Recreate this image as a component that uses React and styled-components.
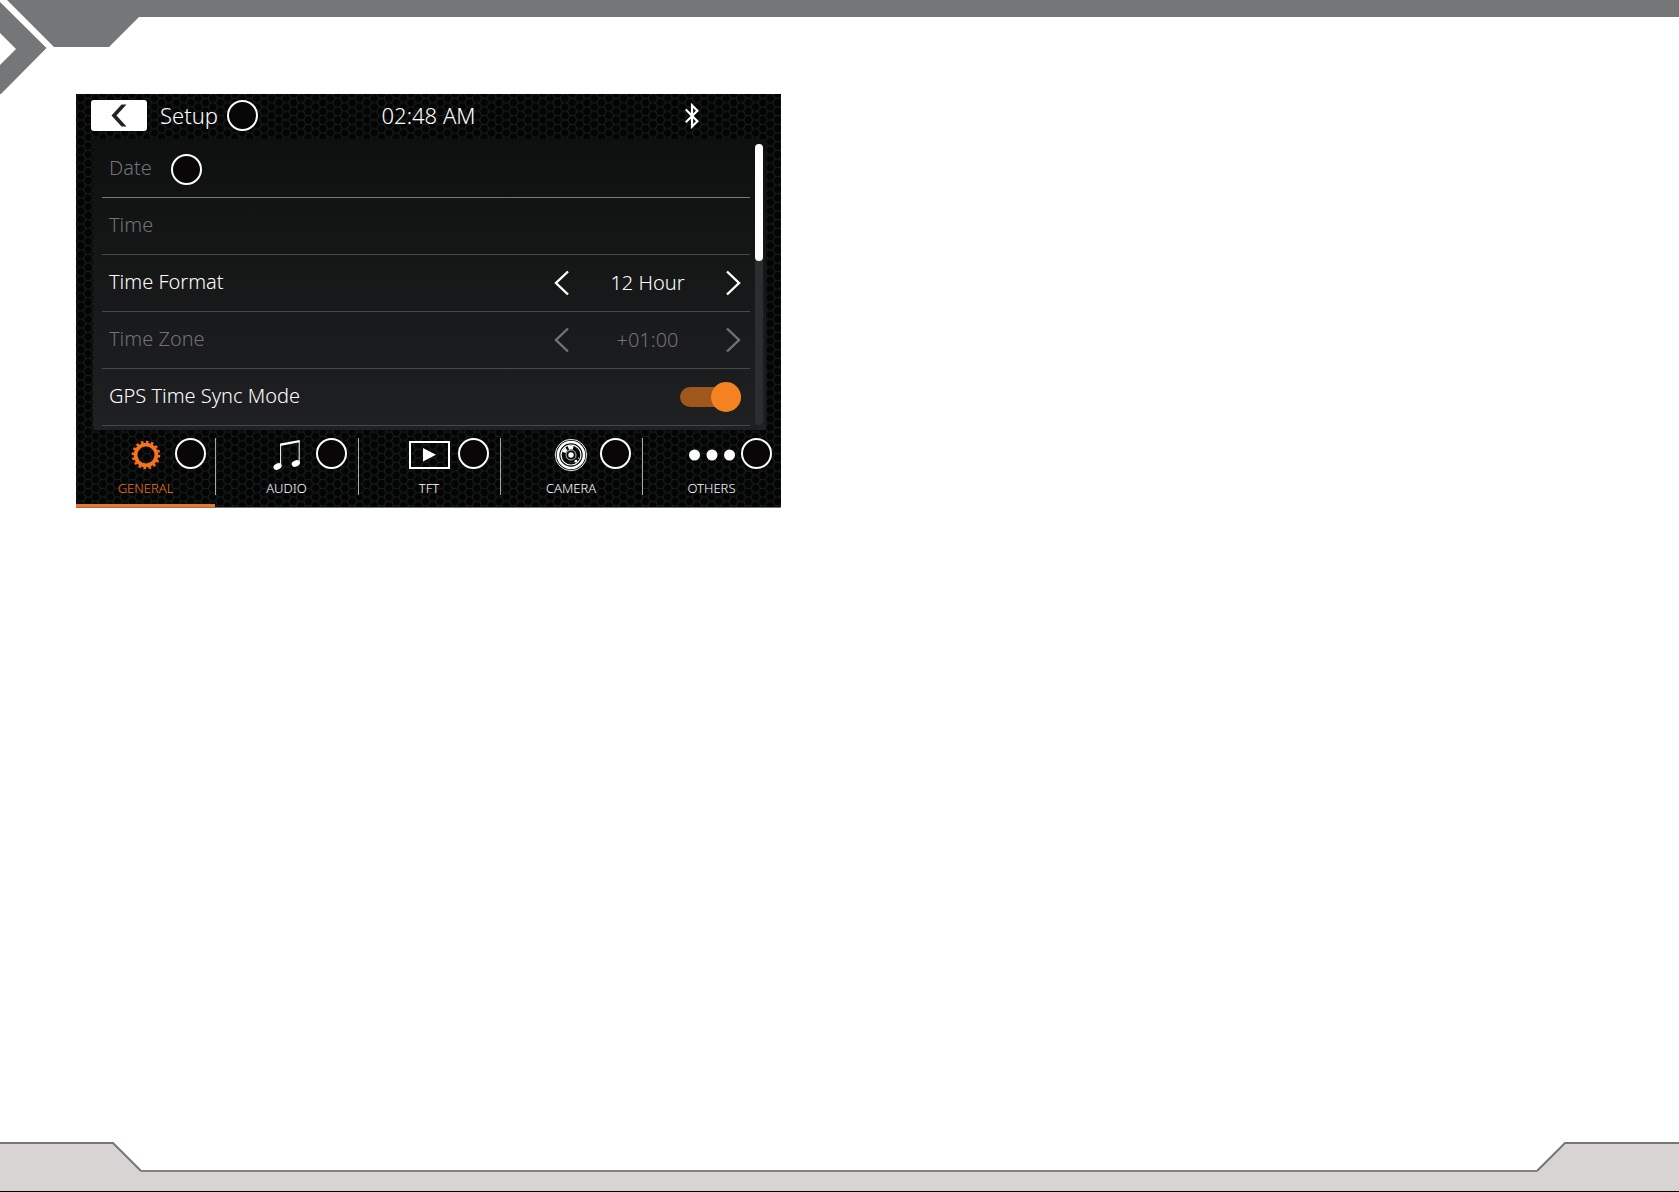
import React, { useState } from 'react'
import styled, { createGlobalStyle } from 'styled-components'

const orange = '#f4731c'

const hexTile = encodeURIComponent(
  `<svg xmlns="http://www.w3.org/2000/svg" width="44" height="26">
    <defs>
      <pattern id="h" width="14.667" height="8.667" patternUnits="userSpaceOnUse">
        <path d="M0 4.33L2.44 0H7.33L9.78 4.33L7.33 8.67H2.44ZM9.78 4.33H14.67" fill="none" stroke="#1d1f20" stroke-width="1"/>
      </pattern>
    </defs>
    <rect width="44" height="26" fill="#030404"/>
    <rect width="44" height="26" fill="url(#h)"/>
  </svg>`
)

const GlobalStyle = createGlobalStyle`
  *, *::before, *::after {
    box-sizing: border-box;
  }
  body {
    margin: 0;
    background: #fff;
    font-family: "Noto Sans", "Open Sans", sans-serif;
  }
  button {
    border: 0;
    padding: 0;
    background: none;
    color: inherit;
    font: inherit;
    cursor: pointer;
  }
  svg {
    display: block;
  }
`

const Page = styled.div`
  display: flex;
  flex-direction: column;
  min-height: 100vh;
`

const PageHeader = styled.header`
  display: flex;
  align-items: flex-start;
`

const HeaderBar = styled.div`
  flex: 1;
  height: 17px;
  background: #757678;
`

const Main = styled.main`
  flex: 1;
  padding: 0 76px;
`

const PageFooter = styled.footer`
  display: flex;
  align-items: flex-end;
  border-bottom: 1px solid #000;
`

const FooterBar = styled.div`
  flex: 1;
  height: 21px;
  border-top: 2px solid #828283;
  background: #d8d4d3;
`

const Device = styled.section`
  display: flex;
  flex-direction: column;
  width: 100%;
  max-width: 705px;
  border-bottom: 1px solid #777;
  background-color: #030404;
  background-image: url("data:image/svg+xml,${hexTile}");
  color: #fff;
`

const StatusBar = styled.div`
  display: grid;
  grid-template-columns: 1fr auto 1fr;
  align-items: center;
  height: 45px;
  padding: 0 15px 2px;
  font-size: 22px;
  line-height: 30px;
`

const StatusLeft = styled.div`
  display: flex;
  align-items: center;
`

const StatusRight = styled.div`
  display: flex;
  justify-content: flex-end;
  padding-right: 67px;
`

const BackButton = styled.button`
  display: flex;
  align-items: center;
  justify-content: center;
  width: 56px;
  height: 31px;
  margin-right: 13px;
  border-radius: 3px;
  background: #fff;
  color: #222326;
`

const Title = styled.h1`
  margin: 0;
  padding-bottom: 2px;
  font-size: 22px;
  font-weight: 300;
  line-height: 30px;
`

const Clock = styled.time`
  padding-bottom: 2px;
  font-weight: 300;
`

const Marker = styled.span`
  flex: none;
  width: 31px;
  height: 31px;
  margin-left: ${props => props.gap || 0}px;
  border: 2px solid #fff;
  border-radius: 50%;
  background: #080606;
`

const Panel = styled.div`
  display: flex;
  height: 291px;
  margin: 0 15px 0 17px;
  padding: 2px 3px 0 9px;
  border-radius: 2px;
  background: linear-gradient(#0e0f0f, #151616 40%, #1f2022);
`

const Rows = styled.ul`
  flex: 1;
  margin: 0;
  padding: 0;
  list-style: none;
`

const Row = styled.li`
  display: flex;
  align-items: center;
  height: 57px;
  padding: 0 9px 0 7px;
  border-bottom: 1px solid ${props => (props.strong ? '#77787a' : '#47484a')};
  color: ${props => (props.muted ? '#717376' : '#fff')};
  font-size: 20px;
  font-weight: 300;
  line-height: 28px;
`

const RowText = styled.span`
  padding-bottom: 2px;
`

const Stepper = styled.div`
  display: flex;
  align-items: center;
  justify-content: space-between;
  width: 187px;
  margin-left: auto;
`

const Arrow = styled.button`
  width: 16px;
  height: 26px;

  &:disabled {
    cursor: default;
  }
`

const SwitchLabel = styled.label`
  flex: 1;
  padding-bottom: 2px;
`

const Switch = styled.input`
  appearance: none;
  display: flex;
  align-items: center;
  width: 61px;
  height: 20px;
  margin: 0;
  border-radius: 10px;
  background: #a0571b;
  cursor: pointer;

  &::before {
    content: '';
    flex: none;
    width: 30px;
    height: 30px;
    border-radius: 50%;
    background: #f58220;
  }

  &:checked::before {
    margin-left: auto;
  }
`

const ScrollTrack = styled.div`
  width: 8px;
  height: 281px;
  margin: 3px 0 0 5px;
  border-radius: 4px;
  background: #2c2d2f;
`

const ScrollThumb = styled.div`
  height: 117px;
  border-radius: 4px;
  background: #fff;
`

const Tabs = styled.nav`
  display: grid;
  grid-template-columns: 139fr 143fr 142fr 142fr 139fr;
  height: 77px;
`

const Tab = styled.button`
  position: relative;
  display: flex;
  flex-direction: column;
  align-items: center;
  border-bottom: 3px solid ${props => (props.active ? orange : 'transparent')};
  padding-top: 8px;
  color: ${props => (props.active ? orange : '#fff')};
  font-size: 13px;
  font-weight: 300;
  line-height: 18px;

  &:not(:first-child)::before {
    content: '';
    position: absolute;
    top: 8px;
    left: 0;
    width: 1px;
    height: 57px;
    background: #a7a9ab;
  }
`

const TabIcon = styled.span`
  display: flex;
  align-items: center;
  height: 34px;
  margin-bottom: 7px;
`

const TabMarker = styled(Marker)`
  position: absolute;
  top: 8px;
  left: calc(50% + 29px);
`

const Chevron = ({ right }) => (
  <svg width="16" height="26" viewBox="0 0 16 26" fill="none" stroke="currentColor" strokeWidth="2.4">
    <path d={right ? 'M2 1.5L14 13L2 24.5' : 'M14 1.5L2 13L14 24.5'} />
  </svg>
)

const BackIcon = () => (
  <svg width="16" height="23" viewBox="0 0 16 23" fill="currentColor">
    <path d="M10.5 0.5H15.5L5.5 11.5L15.5 22.5H10.5L0.5 11.5Z" />
  </svg>
)

const BluetoothIcon = () => (
  <svg width="14" height="26" viewBox="0 0 14 26" fill="none" stroke="currentColor" strokeWidth="2.2">
    <path d="M0.8 6.5L12.4 18.2L7 23.5V2.3L12.4 7.8L0.8 19.3" />
  </svg>
)

const GearIcon = () => (
  <svg width="30" height="30" viewBox="-15 -15 30 30" fill="none" stroke="currentColor">
    <circle r="10.4" strokeWidth="3.8" />
    {/* 16 teeth round the ring */}
    <circle r="13" strokeWidth="2.6" pathLength="32" strokeDasharray="1 1" />
  </svg>
)

const NotesIcon = () => (
  <svg width="28" height="32" viewBox="0 0 28 32" fill="currentColor">
    <path d="M7.2 4.6L26.6 1V3.3L7.2 6.9Z" />
    <path d="M7.6 4.8V27M26.2 2V24" stroke="currentColor" strokeWidth="1" />
    <ellipse cx="4.6" cy="27.5" rx="4.3" ry="3" transform="rotate(-25 4.6 27.5)" />
    <ellipse cx="22.8" cy="24.5" rx="4.3" ry="3" transform="rotate(-25 22.8 24.5)" />
  </svg>
)

const ScreenIcon = () => (
  <svg width="41" height="28" viewBox="0 0 41 28">
    <rect x="1" y="1" width="39" height="26" fill="none" stroke="currentColor" strokeWidth="2" />
    <path d="M14 7L27 13.7L14 20.5Z" fill="currentColor" />
  </svg>
)

const LensIcon = () => (
  <svg width="34" height="34" viewBox="-17 -17 34 34" fill="none" stroke="currentColor">
    <circle r="15.7" strokeWidth="0.9" />
    <circle r="13" strokeWidth="2.6" />
    <circle r="10" strokeWidth="1.2" />
    <circle r="5" strokeWidth="0.7" />
    <circle r="2.7" fill="currentColor" stroke="none" />
    <path d="M-7.2 -2.6A7.6 7.6 0 0 1 -4.6 -6M-2.6 -7A7.6 7.6 0 0 1 2.2 -7.3" strokeWidth="3.8" />
    <circle cx="4.9" cy="6.2" r="1.4" fill="currentColor" stroke="none" />
    <circle cx="7.4" cy="3" r="0.6" fill="currentColor" stroke="none" />
  </svg>
)

const DotsIcon = () => (
  <svg width="46" height="12" viewBox="0 0 46 12" fill="currentColor">
    <circle cx="5.5" cy="6" r="5.5" />
    <circle cx="23" cy="6" r="5.5" />
    <circle cx="40.5" cy="6" r="5.5" />
  </svg>
)

const tabs = [
  { label: 'GENERAL', Icon: GearIcon },
  { label: 'AUDIO', Icon: NotesIcon },
  { label: 'TFT', Icon: ScreenIcon },
  { label: 'CAMERA', Icon: LensIcon },
  { label: 'OTHERS', Icon: DotsIcon },
]

const StepperRow = ({ label, value, disabled }) => (
  <Row muted={disabled ? 1 : undefined}>
    <RowText>{label}</RowText>
    <Stepper>
      <Arrow disabled={disabled} aria-label={`Previous ${label}`}>
        <Chevron />
      </Arrow>
      <output>{value}</output>
      <Arrow disabled={disabled} aria-label={`Next ${label}`}>
        <Chevron right />
      </Arrow>
    </Stepper>
  </Row>
)

const Setup = () => {
  const [current, setCurrent] = useState('GENERAL')
  const [sync, setSync] = useState(true)

  return (
    <Device>
      <StatusBar>
        <StatusLeft>
          <BackButton aria-label="Back">
            <BackIcon />
          </BackButton>
          <Title>Setup</Title>
          <Marker gap={9} />
        </StatusLeft>
        <Clock>02:48 AM</Clock>
        <StatusRight>
          <BluetoothIcon />
        </StatusRight>
      </StatusBar>
      <Panel>
        <Rows>
          <Row muted={1} strong={1}>
            <RowText>Date</RowText>
            <Marker gap={19} />
          </Row>
          <Row muted={1}>
            <RowText>Time</RowText>
          </Row>
          <StepperRow label="Time Format" value="12 Hour" />
          <StepperRow label="Time Zone" value="+01:00" disabled />
          <Row>
            <SwitchLabel htmlFor="gps-sync">GPS Time Sync Mode</SwitchLabel>
            <Switch
              id="gps-sync"
              type="checkbox"
              checked={sync}
              onChange={() => setSync(!sync)}
            />
          </Row>
        </Rows>
        <ScrollTrack>
          <ScrollThumb />
        </ScrollTrack>
      </Panel>
      <Tabs>
        {tabs.map(({ label, Icon }) => (
          <Tab
            key={label}
            active={label === current ? 1 : undefined}
            onClick={() => setCurrent(label)}
          >
            <TabIcon>
              <Icon />
            </TabIcon>
            {label}
            <TabMarker />
          </Tab>
        ))}
      </Tabs>
    </Device>
  )
}

const App = () => (
  <Page>
    <GlobalStyle />
    <PageHeader>
      <svg width="139" height="94" viewBox="0 0 139 94" fill="#757678">
        <path d="M0 2L46.5 48L0 95V65L16 49L0 33Z" />
        <path d="M7 0H139V17L109 47H54Z" />
      </svg>
      <HeaderBar />
    </PageHeader>
    <Main>
      <Setup />
    </Main>
    <PageFooter>
      <svg width="141" height="50" viewBox="0 0 141 50">
        <path d="M0 2H113L141 30V50H0Z" fill="#d8d4d3" />
        <path d="M0 2H113L141 30" fill="none" stroke="#757678" strokeWidth="2" />
      </svg>
      <FooterBar />
      <svg width="142" height="50" viewBox="0 0 142 50">
        <path d="M142 2H28L0 30V50H142Z" fill="#d8d4d3" />
        <path d="M142 2H28L0 30" fill="none" stroke="#757678" strokeWidth="2" />
      </svg>
    </PageFooter>
  </Page>
)

export default App
